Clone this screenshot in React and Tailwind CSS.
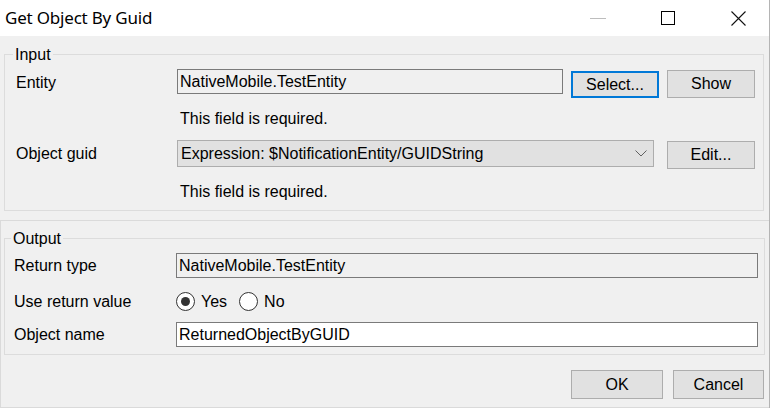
import React from 'react';

const ui = "font-['Liberation_Sans',Arial,sans-serif]";

function Btn({ children, focused, className = '' }) {
  return (
    <div
      className={`flex items-center justify-center bg-[#e1e1e1] ${
        focused ? 'border-2 border-[#0078d7]' : 'border border-[#adadad]'
      } ${className}`}
    >
      {children}
    </div>
  );
}

function Radio({ checked }) {
  return (
    <div className="w-[19px] h-[19px] rounded-full border border-[#333] bg-white flex items-center justify-center">
      {checked && <div className="w-[9px] h-[9px] rounded-full bg-[#333]" />}
    </div>
  );
}

export default function App() {
  return (
    <div className={`w-[770px] h-[408px] bg-[#f0f0f0] border-r border-[#b4b4b4] flex flex-col text-[16px] text-black ${ui}`}>
      {/* title bar */}
      <div className="h-[36px] bg-white flex items-center shrink-0">
        <span className="pl-[5px] text-[17px] tracking-[-0.2px] font-['Noto_Sans',sans-serif]">Get Object By Guid</span>
        <div className="ml-auto flex items-center mr-[23px]">
          <div className="w-[16px] h-px bg-[#bdbdbd]" />
          <div className="ml-[55px] w-[14px] h-[14px] border border-black" />
          <svg className="ml-[56px]" width="15" height="15" viewBox="0 0 15 15">
            <path d="M0.5 0.5 L14.5 14.5 M14.5 0.5 L0.5 14.5" stroke="#111" strokeWidth="1.1" fill="none" />
          </svg>
        </div>
      </div>

      {/* input panel */}
      <div className="h-[184px] px-[4px] pt-[9px] shrink-0">
        <fieldset className="w-[760px] h-[166px] border border-[#dcdcdc]">
          <legend className="ml-[8px] px-[2px] leading-[19px]">Input</legend>
          <div className="mt-[5px] h-[29px] flex items-start">
            <div className="pl-[11px] w-[172px] leading-[27px]">Entity</div>
            <div className="w-[386px] h-[25px] border border-[#7a7a7a] bg-[#f0f0f0] pl-[2px] leading-[23px]">NativeMobile.TestEntity</div>
            <Btn focused className="ml-[8px] mt-[2px] w-[88px] h-[27px]">Select...</Btn>
            <Btn className="ml-[8px] mt-[1px] w-[88px] h-[28px]">Show</Btn>
          </div>
          <div className="mt-[11px] pl-[175px] leading-[20px]">This field is required.</div>
          <div className="mt-[11px] h-[29px] flex items-start">
            <div className="pl-[11px] w-[172px] leading-[28px]">Object guid</div>
            <div className="w-[477px] h-[27px] border border-[#adadad] bg-[#e1e1e1] pl-[3px] flex items-center">
              <span className="pt-px">Expression: $NotificationEntity/GUIDString</span>
              <svg className="ml-auto mr-[6px]" width="12" height="7" viewBox="0 0 12 7">
                <path d="M0.5 0.5 L6 6 L11.5 0.5" stroke="#606060" strokeWidth="1" fill="none" />
              </svg>
            </div>
            <Btn className="ml-[13px] mt-[1px] w-[88px] h-[28px]">Edit...</Btn>
          </div>
          <div className="mt-[13px] pl-[175px] leading-[20px]">This field is required.</div>
        </fieldset>
      </div>

      {/* output panel */}
      <div className="flex-1 border-t border-l border-b border-[#dadada] px-[3px] pt-[8px]">
        <fieldset className="w-[761px] h-[126px] border border-[#dcdcdc]">
          <legend className="ml-[6px] px-[2px] leading-[19px]">Output</legend>
          <div className="mt-[5px] flex items-center">
            <div className="pl-[9px] w-[171px] pt-px">Return type</div>
            <div className="w-[582px] h-[25px] border border-[#7a7a7a] bg-[#f0f0f0] pl-[2px] leading-[23px]">NativeMobile.TestEntity</div>
          </div>
          <div className="mt-[13px] h-[20px] flex items-center">
            <div className="pl-[9px] w-[171px] pt-px">Use return value</div>
            <Radio checked />
            <span className="ml-[6px] pt-px">Yes</span>
            <div className="ml-[12px]"><Radio /></div>
            <span className="ml-[6px] pt-px">No</span>
          </div>
          <div className="mt-[11px] flex items-center">
            <div className="pl-[9px] w-[171px] pt-px">Object name</div>
            <div className="w-[582px] h-[25px] border border-[#7a7a7a] bg-white pl-[2px] leading-[23px]">ReturnedObjectByGUID</div>
          </div>
        </fieldset>
        <div className="mt-[15px] flex justify-end pr-[2px] gap-[10px]">
          <Btn className="w-[92px] h-[29px]">OK</Btn>
          <Btn className="w-[91px] h-[29px]">Cancel</Btn>
        </div>
      </div>
    </div>
  );
}
